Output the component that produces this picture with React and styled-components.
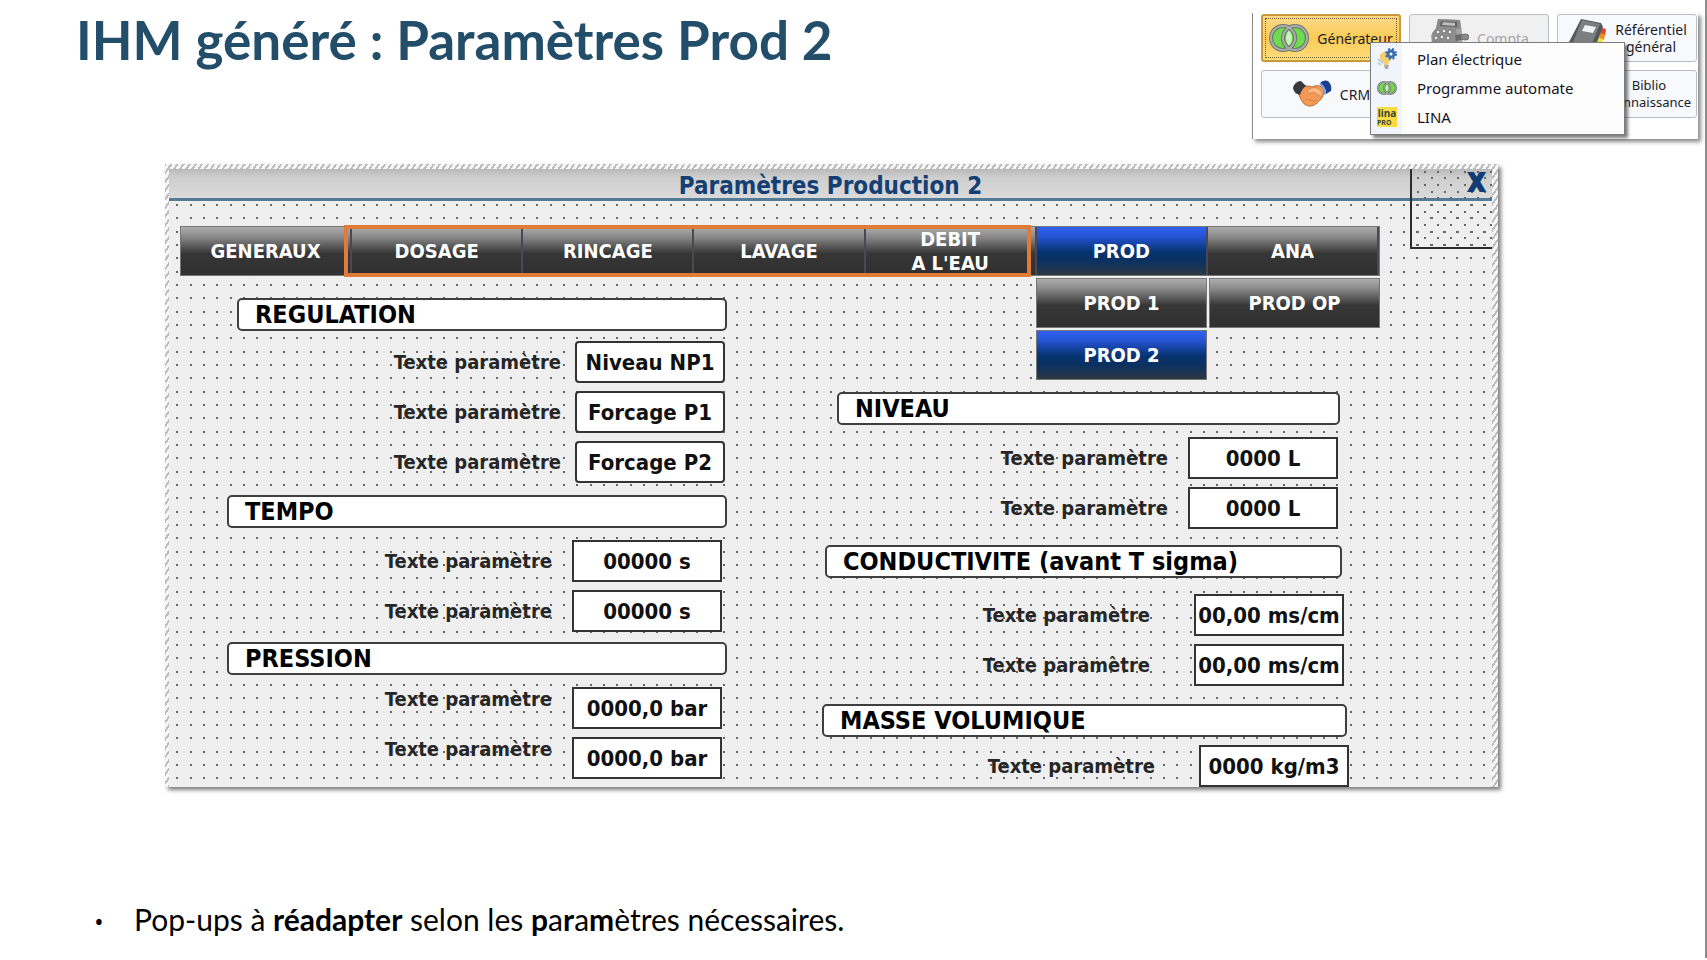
import React from "react";
import styled, { createGlobalStyle, css } from "styled-components";

const GlobalStyle = createGlobalStyle`
  * {
    box-sizing: border-box;
  }

  body {
    margin: 0;
    background: #fff;
    color: #000;
  }
`;

const slideFont = `Lato, "Open Sans", sans-serif`;
const hmiFont = `"DejaVu Sans Condensed", "DejaVu Sans", sans-serif`;
const menuFont = `"Noto Sans", "Open Sans", sans-serif`;

const svgTile = body =>
  `url("data:image/svg+xml,${encodeURIComponent(
    `<svg xmlns="http://www.w3.org/2000/svg" width="40" height="40" fill="#666">${body}</svg>`
  )}")`;

const dots = (xs, ys) =>
  xs
    .map(x => ys.map(y => `<rect x="${x}" y="${y}" width="2" height="2"/>`).join(""))
    .join("");

// designer grid, three dots per 40px
const gridDots = svgTile(dots([7, 21, 34], [8, 22, 35]));
const denseDots = svgTile(
  dots([5, 19, 32], [8, 22, 35]) + dots([12, 25, 38], [2, 15, 28])
);

/* ---------- slide ---------- */

const Slide = styled.main`
  display: flex;
  flex-direction: column;
  min-height: calc(100vh - 2px);
  margin-right: 2px;
  background: #fff;
  box-shadow: 1px 1px 1px 1px #8c8c8c;
  font-family: ${slideFont};
`;

const SlideHeader = styled.header`
  display: flex;
  justify-content: space-between;
  align-items: flex-start;
  padding: 13px 7px 0 76px;
`;

const SlideTitle = styled.h1`
  margin: 0;
  color: #224e6a;
  font-size: 53px;
  line-height: 54px;
  font-weight: 700;
`;

const Notes = styled.ul`
  margin: 110px 0 14px;
  padding: 0 0 0 94px;
  font-size: 30px;
  line-height: 44px;
  list-style: none;

  li::before {
    content: "•";
    display: inline-block;
    width: 40px;
    font-family: "Open Sans", sans-serif;
    font-size: 26px;
  }
`;

/* ---------- launcher (top right) ---------- */

const Launcher = styled.nav`
  position: relative;
  display: grid;
  grid-template-columns: repeat(3, 140px);
  grid-auto-rows: 48px;
  gap: 8px;
  height: 126px;
  padding: 1px 1px 0 8px;
  border-left: 1px solid #8a8a8a;
  background: #fff;
  box-shadow: 3px 3px 4px rgba(0, 0, 0, 0.45);
  font-family: ${menuFont};
`;

const LauncherButton = styled.button`
  display: flex;
  align-items: center;
  justify-content: center;
  gap: 8px;
  padding: 0 4px;
  border: 1px solid #b9bec6;
  border-radius: 3px;
  background: #f7f9fc;
  color: #1c1c2c;
  font-family: inherit;
  font-size: ${props => (props.$small ? "13px" : "14px")};
  line-height: 17px;

  &:disabled {
    background: #f0f0f0;
    color: #a5a5a5;
  }

  ${props =>
    props.$active &&
    css`
      border: 2px solid #c9983a;
      background: linear-gradient(#fbd98a, #fbcb55 50%, #fddc7c);
      outline: 1px dotted #6b5a2c;
      outline-offset: -5px;
    `}
`;

const TwoLines = styled.span`
  padding-left: ${props => (props.$pushed ? "44px" : "0")};
  white-space: pre-line;
  text-align: center;
`;

const Menu = styled.ul`
  position: absolute;
  top: 29px;
  left: 117px;
  width: 255px;
  margin: 0;
  padding: 1px 0 3px;
  border: 1px solid #7c7c7c;
  background: linear-gradient(to right, #f1f4fa 31px, #fdfdfd 31px);
  box-shadow: 3px 3px 3px rgba(0, 0, 0, 0.5);
  list-style: none;
`;

const MenuItem = styled.button`
  display: grid;
  grid-template-columns: 20px 1fr;
  align-items: center;
  column-gap: 20px;
  width: 100%;
  height: 29px;
  padding: 0 0 0 6px;
  border: 0;
  background: none;
  color: #14141f;
  font-family: inherit;
  font-size: 15px;
  text-align: left;
`;

/* ---------- HMI popup ---------- */

const Popup = styled.section`
  margin: 25px 207px 0 165px;
  padding: 5px 6px 0 4px;
  background: repeating-linear-gradient(
    -55deg,
    #f6f6f6 0 3px,
    #bdbdbd 3px 5px
  );
  box-shadow: 3px 3px 4px rgba(0, 0, 0, 0.5);
  font-family: ${hmiFont};
  font-weight: 700;
`;

const Surface = styled.div`
  position: relative;
  background: ${gridDots} #efefef;
`;

const PopupTitle = styled.h2`
  height: 32px;
  margin: 0;
  border-bottom: 3px solid #537b95;
  background: linear-gradient(#b9b9b9, #cfcfcf 30%, #dadada);
  color: #143f73;
  font-size: 24px;
  line-height: 34px;
  text-align: center;
`;

const CloseBox = styled.button`
  position: absolute;
  top: 0;
  right: 0;
  width: 82px;
  height: 80px;
  padding: 0 7px 52px 0;
  border: solid #2c2c2c;
  border-width: 0 0 2px 2px;
  background: ${denseDots};
  color: #123c73;
  font-family: inherit;
  font-size: 24px;
  line-height: 28px;
  font-weight: 700;
  text-align: right;
  -webkit-text-stroke: 2px #123c73;
`;

const TabBar = styled.nav`
  position: relative;
  display: grid;
  grid-template-columns: repeat(7, 1fr);
  margin: 25px 112px 0 11px;
  border: 1px solid #777;
`;

const Tab = styled.button`
  height: ${props => (props.$sub ? "50px" : "48px")};
  padding: 0;
  border: ${props => (props.$sub ? "1px solid #777" : "0")};
  border-right: ${props => (props.$sub ? "1px solid #777" : "2px solid #484858")};
  background: ${props =>
    props.$active
      ? "linear-gradient(#2f62f0, #2453d4 20%, #07336f 52%, #0b3162 70%, #2b3744)"
      : "linear-gradient(#adadad, #8a8a8a 20%, #363636 55%, #303030)"};
  color: #fff;
  font-family: inherit;
  font-size: 20px;
  line-height: 24px;
  font-weight: 700;
  white-space: pre-line;
`;

const TabHighlight = styled.div`
  position: absolute;
  inset: -2px calc(100% / 7 * 2 + 6px) -2px calc(100% / 7 - 8px);
  border: 4px solid #e07b38;
  pointer-events: none;
`;

const Columns = styled.div`
  display: grid;
  grid-template-columns: 547fr 653fr;
  margin: 2px 112px 0 11px;
`;

const Column = styled.div`
  padding-top: ${props => props.$top || 0}px;
`;

const SubTabs = styled.nav`
  display: grid;
  grid-template-columns: repeat(2, 171px);
  justify-content: end;
  gap: 2px;
`;

const Group = styled.section`
  margin: ${props => props.$above}px ${props => props.$right}px 0
    ${props => props.$left}px;
`;

const GroupTitle = styled.h3`
  height: 33px;
  margin: 0;
  padding-left: 16px;
  border: 2px solid #3f3f3f;
  border-radius: 5px;
  background: #fff;
  font-size: 25px;
  line-height: 30px;
`;

const Fields = styled.div`
  display: grid;
  gap: 8px;
  margin: ${props => props.$above}px ${props => props.$inset}px 0 0;
`;

const Field = styled.div`
  display: flex;
  justify-content: flex-end;
  align-items: ${props => (props.$raised ? "flex-start" : "center")};
  gap: ${props => props.$gap}px;
`;

const FieldLabel = styled.label`
  color: #262626;
  font-size: 20px;
  line-height: 24px;
`;

const FieldInput = styled.input`
  width: 150px;
  height: 42px;
  padding: 0;
  border: 2px solid #333;
  border-radius: ${props => (props.$rounded ? "4px" : "0")};
  background: #fff;
  color: #111;
  font-family: inherit;
  font-size: 22px;
  font-weight: 700;
  text-align: center;
`;

/* ---------- icons ---------- */

const RingsIcon = ({ width, height }) => (
  <svg width={width} height={height} viewBox="0 0 40 28" fill="none">
    <circle cx="14" cy="14" r="11" fill="#6fdc4c" />
    <circle cx="26" cy="14" r="11" fill="#6fdc4c" />
    <path d="M20 6c4 5 4 11 0 16c-4-5-4-11 0-16z" fill="#c9f2b6" />
    <circle cx="14" cy="14" r="12" stroke="#6c7470" strokeWidth="4" />
    <circle cx="26" cy="14" r="12" stroke="#6c7470" strokeWidth="4" />
    <circle cx="14" cy="14" r="12" stroke="#a9b0a8" strokeWidth="2" />
    <circle cx="26" cy="14" r="12" stroke="#a9b0a8" strokeWidth="2" />
  </svg>
);

const RegisterIcon = () => (
  <svg width="40" height="40" viewBox="0 0 40 40">
    <path d="M9 1l22 1 2 12 1 24-30-1-2-20 5-4z" fill="#a3a3a3" />
    <path d="M9 1l22 1 1 9-25-1z" fill="#8a8a8a" />
    <path d="M12 3l16 1v5l-17-1z" fill="#606060" />
    <path d="M14 4l12 1v3l-13-1z" fill="#bdbdbd" />
    <path d="M3 15l4-5 20 1 2 13-26 2z" fill="#8f8f8f" />
    <g fill="#efefef" stroke="#6f6f6f">
      <circle cx="9" cy="14" r="2" />
      <circle cx="15" cy="13" r="2" />
      <circle cx="21" cy="14" r="2" />
      <circle cx="7" cy="20" r="2" />
      <circle cx="13" cy="19" r="2" />
      <circle cx="19" cy="20" r="2" />
      <circle cx="6" cy="26" r="2" />
      <circle cx="12" cy="25" r="2" />
    </g>
    <path d="M26 17l8-1 2 5-9 2z" fill="#6b6b6b" />
    <ellipse cx="36" cy="19" rx="4" ry="3" fill="#8c8c8c" stroke="#6f6f6f" />
  </svg>
);

const BinderIcon = () => (
  <svg width="40" height="40" viewBox="0 0 40 40">
    <path d="M35 10l4 1-1 7-5-1z" fill="#e0452c" />
    <path d="M33 15l5 1-1 6-5-1z" fill="#f08a24" />
    <path d="M31 20l5 1-1 6-5-1z" fill="#f4e23a" />
    <path d="M29 26l5 1-2 6-4-1z" fill="#68b944" />
    <path d="M14 1l20 4 2 4-11 28L1 32l-1-4z" fill="#55585a" />
    <path d="M15 2l18 4-11 27-18-4z" fill="#7c7f82" />
    <path d="M18 7l11 2-3 6-11-2z" fill="#f2f2f2" />
  </svg>
);

const HandshakeIcon = () => (
  <svg width="40" height="28" viewBox="0 0 40 28">
    <path
      d="M8 8c5-3 10-2 12-1 4-2 8-2 12 2 0 7-3 11-7 14-3 3-8 4-11 2-4-2-5-6-7-10z"
      fill="#f59a55"
      stroke="#b96a35"
    />
    <path
      d="M15 12c2-4 6-5 10-4 4 2 6 5 5 8-3 1-5-3-9-4-2 1-4 2-6 0z"
      fill="#fdbb84"
      stroke="#d08650"
    />
    <path d="M13 20c3-2 4 1 7 0 1 2 3 1 5-1" fill="none" stroke="#cf7f45" />
    <path d="M1 8c1-4 4-7 8-7l5 5c-3 2-5 5-6 9-4-1-6-3-7-7z" fill="#35393d" />
    <path d="M28 3c3-3 6-3 8-2 3 3 4 6 3 10l-5 3c0-5-2-8-6-11z" fill="#1c3f92" />
    <path d="M27 4l2-1c3 3 5 6 5 11l-2 1c0-5-2-8-5-11z" fill="#7ea2dc" />
  </svg>
);

const PlanIcon = () => (
  <svg width="20" height="22" viewBox="0 0 20 22">
    <path d="M7 4c5-2 8 3 7 7-1 3-3 3-3 6H7c0-3-3-4-4-7-1-3 1-5 4-6z" fill="#f4d06a" />
    <path d="M7 17h5l-1 4H8z" fill="#a9abb0" />
    <path d="M1 11l5 4M1 15l3 2" stroke="#b9cbe2" strokeWidth="2" />
    <circle cx="14" cy="6" r="3" fill="#fff" stroke="#3d6fae" strokeWidth="3" />
    <circle cx="14" cy="6" r="5" fill="none" stroke="#3d6fae" strokeWidth="2" strokeDasharray="2 2" />
  </svg>
);

const LinaBadge = styled.span`
  display: block;
  width: 20px;
  height: 20px;
  background: linear-gradient(100deg, #f5e04a, #fbd83c);
  color: #3c4634;
  font-size: 10px;
  line-height: 12px;
  font-weight: 700;
  text-align: center;

  small {
    display: block;
    font-size: 7px;
    line-height: 8px;
    text-align: left;
  }
`;

const LinaIcon = () => (
  <LinaBadge>
    lina<small>PRO</small>
  </LinaBadge>
);

/* ---------- data ---------- */

const tabs = ["GENERAUX", "DOSAGE", "RINCAGE", "LAVAGE", "DEBIT\nA L'EAU", "PROD", "ANA"];

const subTabs = ["PROD 1", "PROD OP", "PROD 2"];

const leftGroups = [
  {
    title: "REGULATION",
    values: ["Niveau NP1", "Forcage P1", "Forcage P2"],
    left: 57, right: 0, above: 0, fieldsAbove: 10, inset: 2, gap: 14, rounded: true
  },
  {
    title: "TEMPO",
    values: ["00000 s", "00000 s"],
    left: 47, right: 0, above: 12, fieldsAbove: 12, inset: 5, gap: 20
  },
  {
    title: "PRESSION",
    values: ["0000,0 bar", "0000,0 bar"],
    left: 47, right: 0, above: 10, fieldsAbove: 12, inset: 5, gap: 20, raised: true
  }
];

const rightGroups = [
  {
    title: "NIVEAU",
    values: ["0000 L", "0000 L"],
    left: 110, right: 40, above: 12, fieldsAbove: 12, inset: 2, gap: 20
  },
  {
    title: "CONDUCTIVITE (avant T sigma)",
    values: ["00,00 ms/cm", "00,00 ms/cm"],
    left: 98, right: 38, above: 16, fieldsAbove: 16, inset: -2, gap: 44
  },
  {
    title: "MASSE VOLUMIQUE",
    values: ["0000 kg/m3"],
    left: 95, right: 33, above: 18, fieldsAbove: 8, inset: -2, gap: 44
  }
];

const ParamGroup = ({ group }) => (
  <Group $left={group.left} $right={group.right} $above={group.above}>
    <GroupTitle>{group.title}</GroupTitle>
    <Fields $above={group.fieldsAbove} $inset={group.inset}>
      {group.values.map((value, i) => {
        const id = `${group.title.split(" ")[0].toLowerCase()}-${i}`;
        return (
          <Field key={id} $gap={group.gap} $raised={group.raised}>
            <FieldLabel htmlFor={id}>Texte paramètre</FieldLabel>
            <FieldInput id={id} defaultValue={value} $rounded={group.rounded} />
          </Field>
        );
      })}
    </Fields>
  </Group>
);

const App = () => (
  <>
    <GlobalStyle />
    <Slide>
      <SlideHeader>
        <SlideTitle>IHM généré : Paramètres Prod 2</SlideTitle>

        <Launcher>
          <LauncherButton $active>
            <RingsIcon width={40} height={28} />
            Générateur
          </LauncherButton>
          <LauncherButton disabled>
            <RegisterIcon />
            Compta
          </LauncherButton>
          <LauncherButton>
            <BinderIcon />
            <TwoLines>{"Référentiel\ngénéral"}</TwoLines>
          </LauncherButton>
          <LauncherButton>
            <HandshakeIcon />
            CRM
          </LauncherButton>
          <span />
          <LauncherButton $small>
            <TwoLines $pushed>{"Biblio\nConnaissance"}</TwoLines>
          </LauncherButton>

          <Menu>
            <li>
              <MenuItem>
                <PlanIcon />
                Plan électrique
              </MenuItem>
            </li>
            <li>
              <MenuItem>
                <RingsIcon width={20} height={14} />
                Programme automate
              </MenuItem>
            </li>
            <li>
              <MenuItem>
                <LinaIcon />
                LINA
              </MenuItem>
            </li>
          </Menu>
        </Launcher>
      </SlideHeader>

      <Popup>
        <Surface>
          <PopupTitle>Paramètres Production 2</PopupTitle>
          <CloseBox>X</CloseBox>

          <TabBar>
            {tabs.map(tab => (
              <Tab key={tab} $active={tab === "PROD"}>
                {tab}
              </Tab>
            ))}
            <TabHighlight />
          </TabBar>

          <Columns>
            <Column $top={20}>
              {leftGroups.map(group => (
                <ParamGroup key={group.title} group={group} />
              ))}
            </Column>
            <Column>
              <SubTabs>
                {subTabs.map(tab => (
                  <Tab key={tab} $sub $active={tab === "PROD 2"}>
                    {tab}
                  </Tab>
                ))}
              </SubTabs>
              {rightGroups.map(group => (
                <ParamGroup key={group.title} group={group} />
              ))}
            </Column>
          </Columns>
        </Surface>
      </Popup>

      <Notes>
        <li>
          Pop-ups à <b>réadapter</b> selon les <b>p</b>a<b>r</b>a<b>m</b>ètres
          nécessaires.
        </li>
      </Notes>
    </Slide>
  </>
);

export default App;
